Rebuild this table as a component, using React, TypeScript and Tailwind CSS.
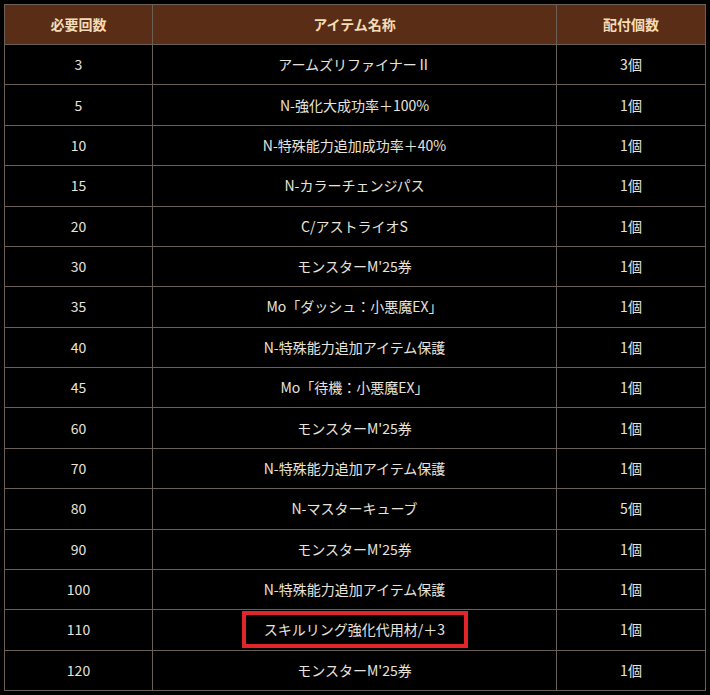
import React from "react";

const rows = [
  { count: "3", name: "アームズリファイナーⅡ", qty: "3個" },
  { count: "5", name: "N-強化大成功率＋100%", qty: "1個" },
  { count: "10", name: "N-特殊能力追加成功率＋40%", qty: "1個" },
  { count: "15", name: "N-カラーチェンジパス", qty: "1個" },
  { count: "20", name: "C/アストライオS", qty: "1個" },
  { count: "30", name: "モンスターM'25券", qty: "1個" },
  { count: "35", name: "Mo「ダッシュ：小悪魔EX」", qty: "1個" },
  { count: "40", name: "N-特殊能力追加アイテム保護", qty: "1個" },
  { count: "45", name: "Mo「待機：小悪魔EX」", qty: "1個" },
  { count: "60", name: "モンスターM'25券", qty: "1個" },
  { count: "70", name: "N-特殊能力追加アイテム保護", qty: "1個" },
  { count: "80", name: "N-マスターキューブ", qty: "5個" },
  { count: "90", name: "モンスターM'25券", qty: "1個" },
  { count: "100", name: "N-特殊能力追加アイテム保護", qty: "1個" },
  { count: "110", name: "スキルリング強化代用材/＋3", qty: "1個", highlight: true },
  { count: "120", name: "モンスターM'25券", qty: "1個" },
];

const App = () => {
  return (
    <div
      className="w-[710px] h-[695px] bg-black pt-[4px] pl-[4px]"
      style={{ fontFamily: '"Noto Sans CJK JP", "Noto Sans", sans-serif' }}
    >
      <table className="w-[702px] border-collapse border border-[#6b6058] text-[14px] text-[#e8e4dc]">
        <thead>
          <tr className="h-[40px] bg-[#5a2d17] text-[#f3dcb6]">
            <th className="w-[148px] border border-[#6b6058] font-bold">必要回数</th>
            <th className="w-[404px] border border-[#6b6058] font-bold">アイテム名称</th>
            <th className="border border-[#6b6058] font-bold">配付個数</th>
          </tr>
        </thead>
        <tbody>
          {rows.map((row, i) => (
            <tr key={i} className="h-[40.375px] bg-black">
              <td className="border border-[#6b6058] text-center">{row.count}</td>
              <td className="border border-[#6b6058] text-center">
                {row.highlight ? (
                  <span className="inline-flex items-center justify-center w-[226px] h-[37px] border-4 border-[#e0262b] align-middle">
                    {row.name}
                  </span>
                ) : (
                  row.name
                )}
              </td>
              <td className="border border-[#6b6058] text-center">{row.qty}</td>
            </tr>
          ))}
        </tbody>
      </table>
    </div>
  );
};

export default App;
